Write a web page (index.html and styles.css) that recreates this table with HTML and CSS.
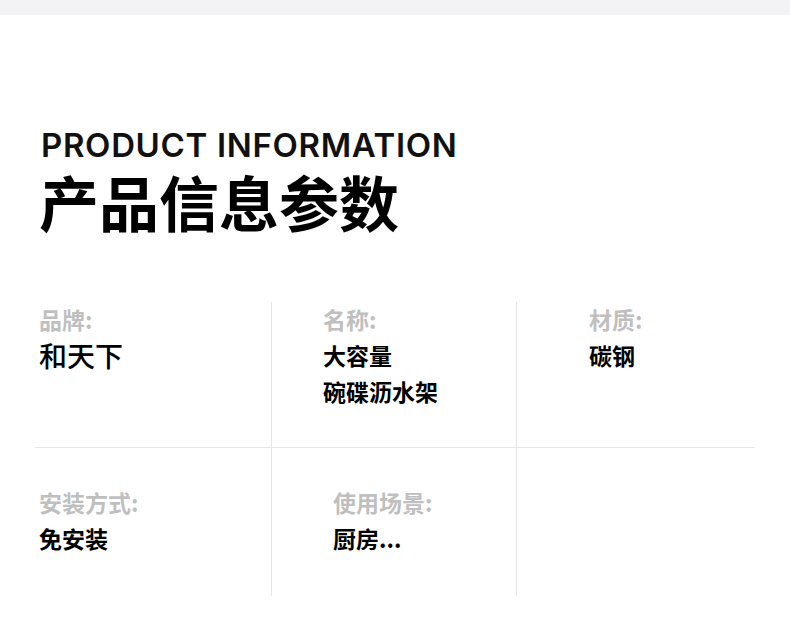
FILE: index.html
```html
<!DOCTYPE html>
<html lang="zh-CN">
<head>
<meta charset="utf-8">
<title>产品信息参数</title>
<link rel="stylesheet" href="styles.css">
</head>
<body>
<div class="topband"></div>
<header class="header">
  <div class="title-en">PRODUCT INFORMATION</div>
  <h1 class="title-cn">产品信息参数</h1>
</header>
<section class="grid">
  <div class="cell r1 c1">
    <div class="label">品牌:</div>
    <div class="value value-lg">和天下</div>
  </div>
  <div class="cell r1 c2">
    <div class="label">名称:</div>
    <div class="value">大容量<br>碗碟沥水架</div>
  </div>
  <div class="cell r1 c3">
    <div class="label">材质:</div>
    <div class="value">碳钢</div>
  </div>
  <div class="cell r2 c1">
    <div class="label">安装方式:</div>
    <div class="value">免安装</div>
  </div>
  <div class="cell r2 c2 c2b">
    <div class="label">使用场景:</div>
    <div class="value">厨房...</div>
  </div>
  <div class="cell r2 c3"></div>
</section>
</body>
</html>
```

FILE: styles.css
```css
* { box-sizing: border-box; }
html, body {
  margin: 0;
  padding: 0;
  background: #ffffff;
}
body {
  width: 790px;
  height: 631px;
  overflow: hidden;
  font-family: "Noto Sans CJK SC", "Noto Sans", sans-serif;
  color: #000;
}
.topband {
  height: 15px;
  background: #f3f3f6;
}
.header {
  padding-left: 41px;
  margin-top: 111px;
}
.title-en {
  font-family: Inter, "Noto Sans", sans-serif;
  font-weight: 600;
  font-size: 33px;
  line-height: 38px;
  letter-spacing: 0.65px;
  color: #111;
}
.title-cn {
  margin: 7px 0 0 -2px;
  font-family: "Noto Sans CJK SC", sans-serif;
  font-weight: 700;
  font-size: 60px;
  line-height: 60px;
  color: #000;
}
.grid {
  display: grid;
  grid-template-columns: 237px 245px 238px;
  grid-template-rows: 146px 148px;
  margin: 71px 0 0 35px;
  width: 720px;
}
.cell.r1 {
  border-bottom: 1px solid #e6e6e6;
  padding-top: 1px;
}
.cell.r2 {
  padding-top: 38px;
}
.cell.c1, .cell.c2 {
  border-right: 1px solid #e6e6e6;
}
.c1 { padding-left: 4px; }
.c2 { padding-left: 51px; }
.c2b { padding-left: 61px; }
.c3 { padding-left: 72px; }
.label {
  font-size: 23px;
  line-height: 32px;
  font-weight: 700;
  color: #bfbfbf;
}
.value {
  font-size: 23px;
  line-height: 36px;
  font-weight: 700;
  color: #000;
}
.r1 .value { margin-top: 2px; }
.r2 .value { margin-top: 2px; }
.value-lg {
  font-size: 28px;
  font-weight: 500;
}
```
